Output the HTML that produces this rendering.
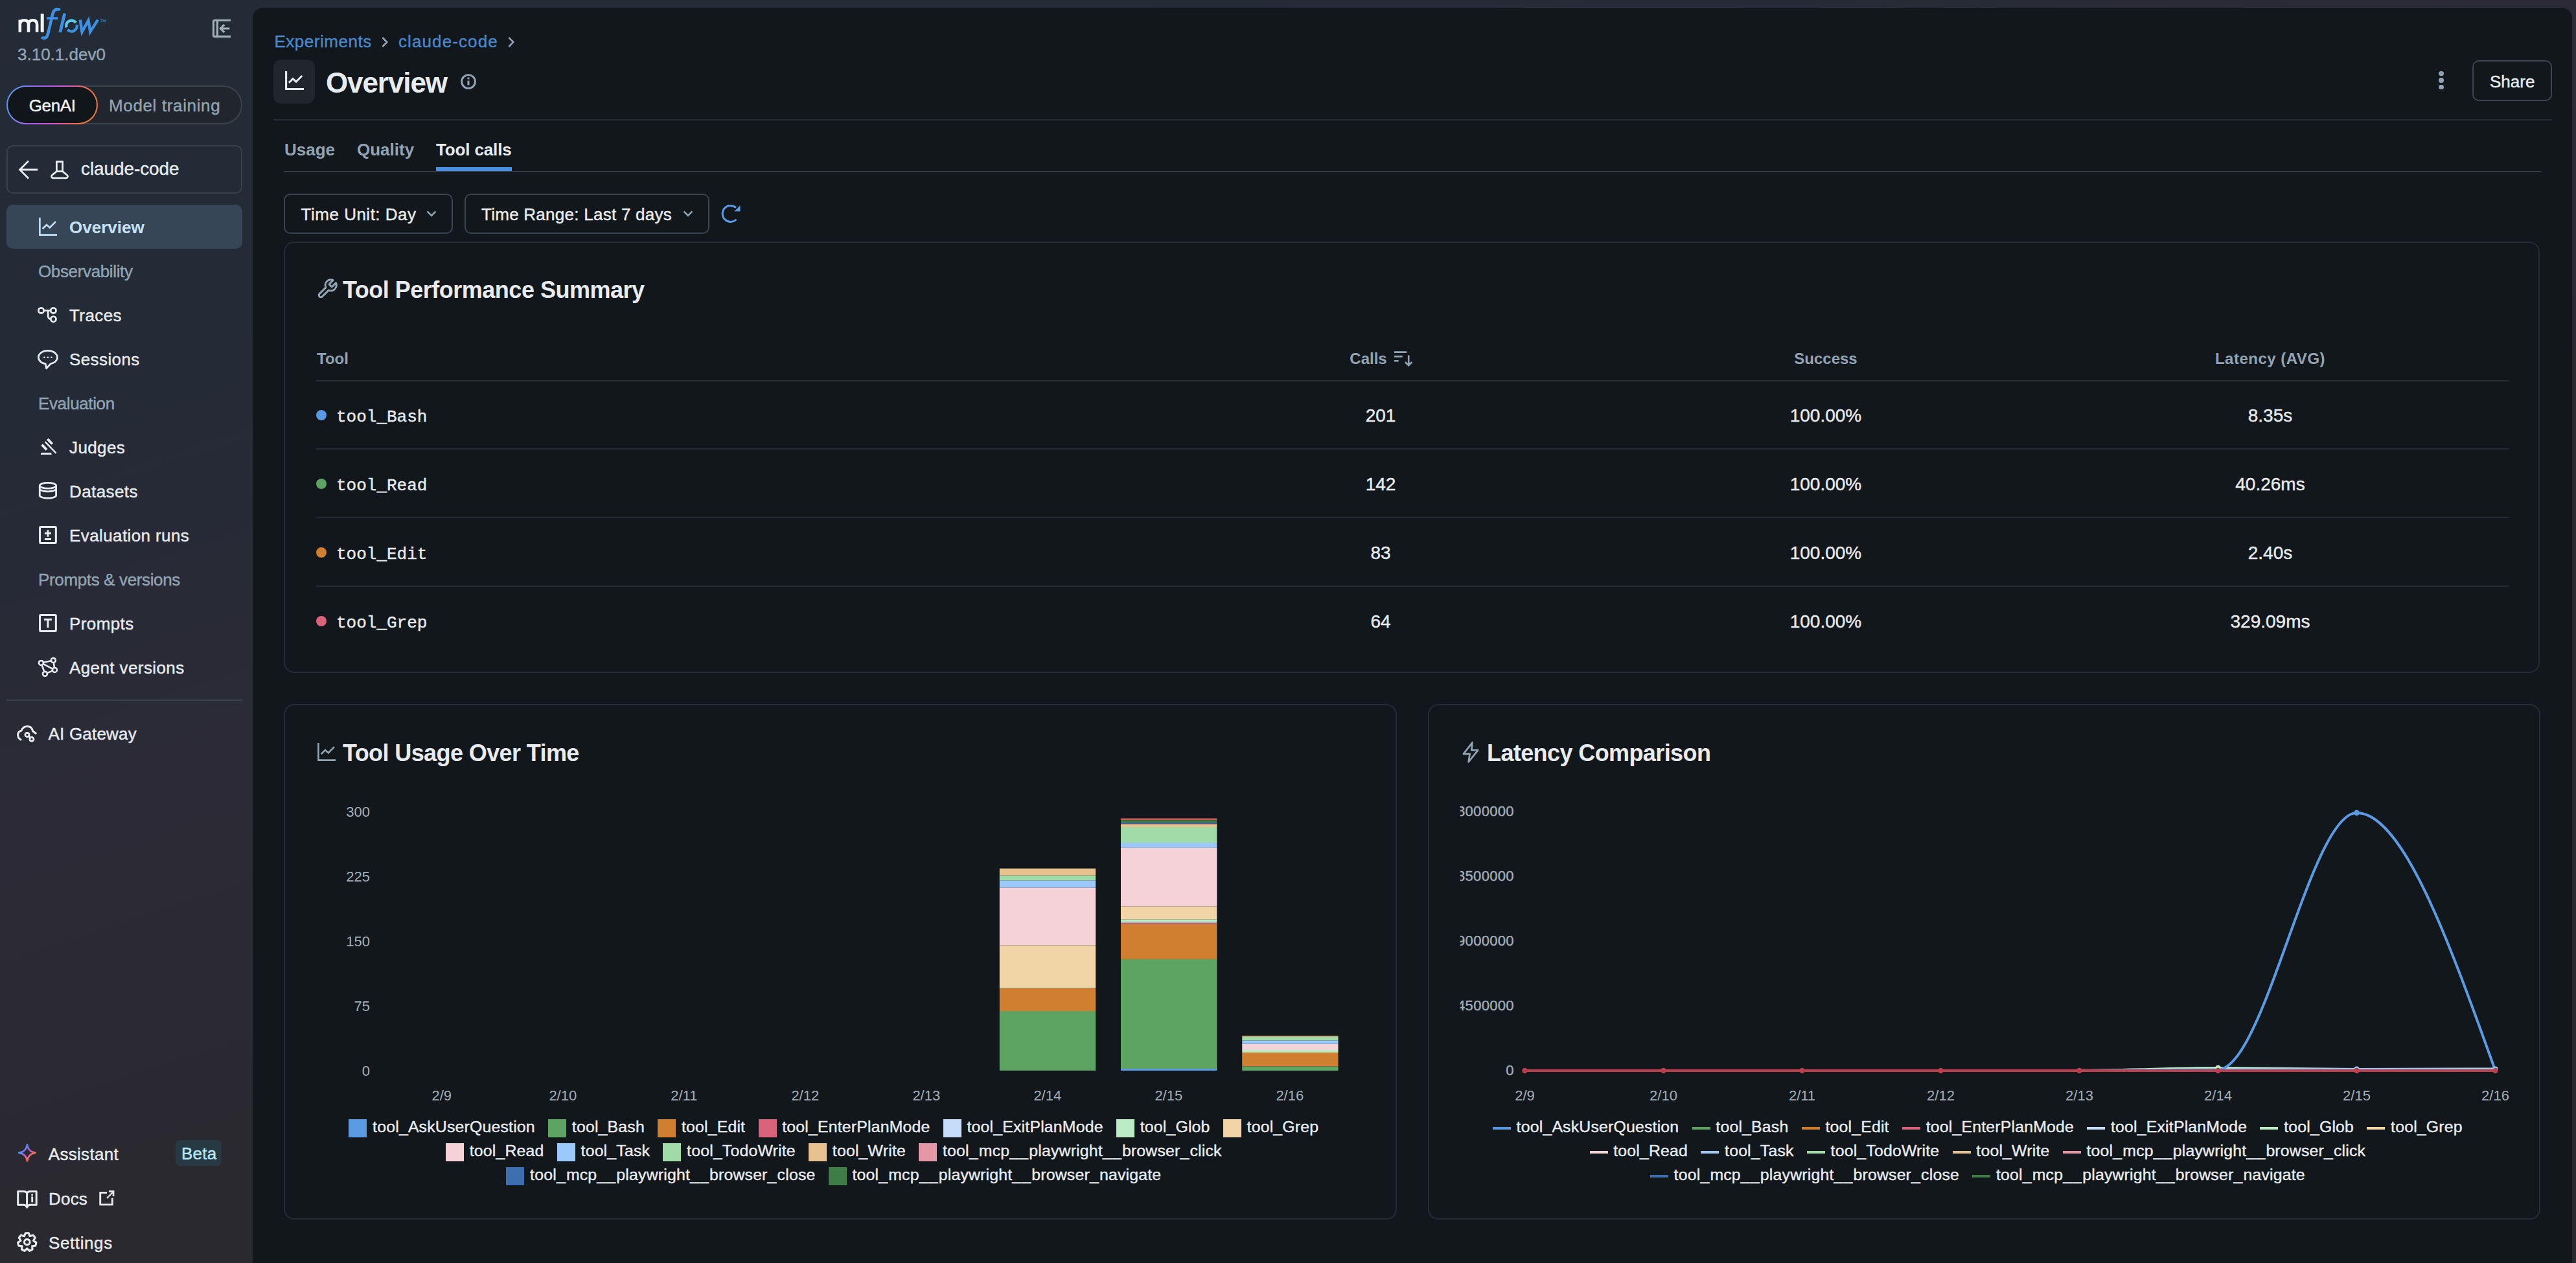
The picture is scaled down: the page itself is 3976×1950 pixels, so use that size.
<!DOCTYPE html>
<html><head><meta charset="utf-8">
<style>
html,body{margin:0;padding:0;background:#12171c;overflow:hidden;}
#root{zoom:2;position:relative;width:1988px;height:975px;overflow:hidden;font-family:"Liberation Sans",sans-serif;font-size:13px;color:#e8ecf0;
background:linear-gradient(161.9deg,#222b36 0%,#232b36 18%,#2c2a37 39%,#2b2a33 50%,#2a292f 60%,#28282d 100%);}
.a{position:absolute;}
.t{position:absolute;white-space:nowrap;line-height:1;-webkit-text-stroke:0.2px currentColor;}
.b{-webkit-text-stroke:0 !important;}
svg{position:absolute;overflow:visible;}
</style></head>
<body><div id="root">

<div class="t" style="left:13.50px;top:35.69px;font-size:13px;color:#92a4b3;font-weight:400;letter-spacing:0px;font-family:'Liberation Sans',sans-serif;">3.10.1.dev0</div>
<div class="a" style="left:5.00px;top:66.00px;width:182.00px;height:30.00px;border:1px solid #3a434d;border-radius:15px;box-sizing:border-box;background:#21262e;"></div>
<div class="a" style="left:5px;top:66px;width:70.5px;height:30px;border-radius:15px;background:linear-gradient(110deg,#52a0f2 0%,#6f8af2 15%,#a85cf0 36%,#d656d8 56%,#f06a58 76%,#f47a3a 90%);"></div>
<div class="a" style="left:6.00px;top:67.00px;width:68.50px;height:28.00px;background:#11161b;border-radius:14px;"></div>
<div class="t" style="left:22.40px;top:74.99px;font-size:13px;color:#f2f4f6;font-weight:400;letter-spacing:-0.2px;font-family:'Liberation Sans',sans-serif;">GenAI</div>
<div class="t" style="left:84.00px;top:74.99px;font-size:13px;color:#92a4b3;font-weight:400;letter-spacing:0.32px;font-family:'Liberation Sans',sans-serif;">Model training</div>
<div class="a" style="left:5.00px;top:112.00px;width:182.00px;height:37.50px;border:1px solid #39424c;border-radius:5px;box-sizing:border-box;background:transparent;"></div>
<div class="t" style="left:62.50px;top:123.65px;font-size:14px;color:#e8ecf0;font-weight:400;letter-spacing:-0.05px;font-family:'Liberation Sans',sans-serif;">claude-code</div>
<div class="a" style="left:5.00px;top:158.00px;width:182.00px;height:34.00px;background:#364656;border-radius:5px;"></div>
<svg style="left:30.00px;top:168.00px;" width="14" height="14" viewBox="0 0 14 14"><path d="M.7 0v13.3H14" stroke="#c7e3fc" stroke-width="1.3" fill="none"/><path d="M2.8 8.6 6 5.5l2.4 2.2 4.6-4.6" stroke="#c7e3fc" stroke-width="1.3" fill="none"/></svg>
<div class="t b" style="left:53.50px;top:168.99px;font-size:13px;color:#c7e3fc;font-weight:700;letter-spacing:0px;font-family:'Liberation Sans',sans-serif;">Overview</div>
<div class="t" style="left:29.50px;top:203.24px;font-size:13px;color:#92a4b3;font-weight:400;letter-spacing:-0.18px;font-family:'Liberation Sans',sans-serif;">Observability</div>
<div class="t" style="left:53.50px;top:236.99px;font-size:13px;color:#e8ecf0;font-weight:400;letter-spacing:0.2px;font-family:'Liberation Sans',sans-serif;">Traces</div>
<div class="t" style="left:53.50px;top:270.99px;font-size:13px;color:#e8ecf0;font-weight:400;letter-spacing:0.2px;font-family:'Liberation Sans',sans-serif;">Sessions</div>
<div class="t" style="left:29.50px;top:304.99px;font-size:13px;color:#92a4b3;font-weight:400;letter-spacing:-0.18px;font-family:'Liberation Sans',sans-serif;">Evaluation</div>
<div class="t" style="left:53.50px;top:338.99px;font-size:13px;color:#e8ecf0;font-weight:400;letter-spacing:0.2px;font-family:'Liberation Sans',sans-serif;">Judges</div>
<div class="t" style="left:53.50px;top:372.99px;font-size:13px;color:#e8ecf0;font-weight:400;letter-spacing:0.2px;font-family:'Liberation Sans',sans-serif;">Datasets</div>
<div class="t" style="left:53.50px;top:406.99px;font-size:13px;color:#e8ecf0;font-weight:400;letter-spacing:0.2px;font-family:'Liberation Sans',sans-serif;">Evaluation runs</div>
<div class="t" style="left:29.50px;top:440.99px;font-size:13px;color:#92a4b3;font-weight:400;letter-spacing:-0.18px;font-family:'Liberation Sans',sans-serif;">Prompts &amp; versions</div>
<div class="t" style="left:53.50px;top:474.99px;font-size:13px;color:#e8ecf0;font-weight:400;letter-spacing:0.2px;font-family:'Liberation Sans',sans-serif;">Prompts</div>
<div class="t" style="left:53.50px;top:508.99px;font-size:13px;color:#e8ecf0;font-weight:400;letter-spacing:0.2px;font-family:'Liberation Sans',sans-serif;">Agent versions</div>
<div class="a" style="left:5.00px;top:540.00px;width:182.00px;height:1.00px;background:#3a434c;"></div>
<div class="t" style="left:37.25px;top:560.14px;font-size:13px;color:#e8ecf0;font-weight:400;letter-spacing:0.1px;font-family:'Liberation Sans',sans-serif;">AI Gateway</div>
<div class="t" style="left:37.40px;top:884.34px;font-size:13px;color:#e8ecf0;font-weight:400;letter-spacing:0.15px;font-family:'Liberation Sans',sans-serif;">Assistant</div>
<div class="a" style="left:135.50px;top:880.10px;width:35.40px;height:19.70px;background:#273a44;border-radius:4px;"></div>
<div class="t" style="left:140.00px;top:883.94px;font-size:13px;color:#b8e8f7;font-weight:400;letter-spacing:0.1px;font-family:'Liberation Sans',sans-serif;">Beta</div>
<div class="t" style="left:37.50px;top:918.84px;font-size:13px;color:#e8ecf0;font-weight:400;letter-spacing:0.1px;font-family:'Liberation Sans',sans-serif;">Docs</div>
<div class="t" style="left:37.50px;top:953.24px;font-size:13px;color:#e8ecf0;font-weight:400;letter-spacing:0.3px;font-family:'Liberation Sans',sans-serif;">Settings</div>
<div class="a" style="left:195px;top:6px;width:1790px;height:1000px;background:#12171c;border-radius:8px;"></div>
<div class="t" style="left:211.70px;top:25.74px;font-size:13px;color:#4a87cc;font-weight:400;letter-spacing:0.27px;font-family:'Liberation Sans',sans-serif;">Experiments</div>
<svg style="left:294.00px;top:27.50px;" width="6" height="10" viewBox="0 0 6 10"><path d="M1.2 1.5 4.6 5 1.2 8.5" stroke="#92a4b3" stroke-width="1.3" fill="none"/></svg>
<div class="t" style="left:307.50px;top:25.74px;font-size:13px;color:#4a87cc;font-weight:400;letter-spacing:0.55px;font-family:'Liberation Sans',sans-serif;">claude-code</div>
<svg style="left:391.50px;top:27.50px;" width="6" height="10" viewBox="0 0 6 10"><path d="M1.2 1.5 4.6 5 1.2 8.5" stroke="#92a4b3" stroke-width="1.3" fill="none"/></svg>
<div class="a" style="left:211.00px;top:46.00px;width:32.00px;height:34.00px;background:#21262d;border-radius:6px;"></div>
<svg style="left:219.80px;top:55.00px;" width="14.5" height="14.5" viewBox="0 0 14.5 14.5"><path d="M.8 0v13.75H14.5" stroke="#e8ecf0" stroke-width="1.55" fill="none"/><path d="M2.9 8.9 6 5.8l2.5 2.3 4.6-4.6" stroke="#e8ecf0" stroke-width="1.5" fill="none"/></svg>
<div class="t b" style="left:251.50px;top:52.87px;font-size:22px;color:#e8ecf0;font-weight:700;letter-spacing:-0.55px;font-family:'Liberation Sans',sans-serif;">Overview</div>
<svg style="left:355.50px;top:57.00px;" width="12" height="12" viewBox="0 0 12 12"><circle cx="6" cy="6" r="5.2" stroke="#92a4b3" stroke-width="1.45" fill="none"/><path d="M6 5.3v3.4" stroke="#92a4b3" stroke-width="1.55"/><circle cx="6" cy="3.45" r=".85" fill="#92a4b3"/></svg>
<div class="a" style="left:1882.10px;top:54.80px;width:3.8px;height:3.8px;border-radius:50%;background:#92a4b3;"></div>
<div class="a" style="left:1882.10px;top:60.10px;width:3.8px;height:3.8px;border-radius:50%;background:#92a4b3;"></div>
<div class="a" style="left:1882.10px;top:65.40px;width:3.8px;height:3.8px;border-radius:50%;background:#92a4b3;"></div>
<div class="a" style="left:1908.00px;top:46.30px;width:61.50px;height:31.50px;border:1px solid #3b4550;border-radius:5px;box-sizing:border-box;background:transparent;"></div>
<div class="t" style="left:1921.50px;top:56.34px;font-size:13px;color:#e8ecf0;font-weight:400;letter-spacing:0px;font-family:'Liberation Sans',sans-serif;">Share</div>
<div class="a" style="left:211.00px;top:92.00px;width:1758.00px;height:1.00px;background:#262d35;"></div>
<div class="t b" style="left:219.50px;top:108.99px;font-size:13px;color:#92a4b3;font-weight:700;letter-spacing:0px;font-family:'Liberation Sans',sans-serif;">Usage</div>
<div class="t b" style="left:275.50px;top:108.99px;font-size:13px;color:#92a4b3;font-weight:700;letter-spacing:0px;font-family:'Liberation Sans',sans-serif;">Quality</div>
<div class="t b" style="left:336.50px;top:108.99px;font-size:13px;color:#e8ecf0;font-weight:700;letter-spacing:-0.07px;font-family:'Liberation Sans',sans-serif;">Tool calls</div>
<div class="a" style="left:219.00px;top:132.00px;width:1742.00px;height:1.00px;background:#343e48;"></div>
<div class="a" style="left:336.50px;top:129.00px;width:58.50px;height:3.00px;background:#4a90e2;"></div>
<div class="a" style="left:219.00px;top:149.30px;width:130.70px;height:31.40px;border:1px solid #3b4550;border-radius:5px;box-sizing:border-box;background:transparent;"></div>
<div class="t" style="left:232.30px;top:158.99px;font-size:13px;color:#e8ecf0;font-weight:400;letter-spacing:0.25px;font-family:'Liberation Sans',sans-serif;">Time Unit: Day</div>
<svg style="left:329.00px;top:162.00px;" width="8" height="6" viewBox="0 0 8 6"><path d="M.8 1.2 4 4.4 7.2 1.2" stroke="#92a4b3" stroke-width="1.3" fill="none"/></svg>
<div class="a" style="left:358.30px;top:149.30px;width:189.20px;height:31.40px;border:1px solid #3b4550;border-radius:5px;box-sizing:border-box;background:transparent;"></div>
<div class="t" style="left:371.50px;top:158.99px;font-size:13px;color:#e8ecf0;font-weight:400;letter-spacing:0.13px;font-family:'Liberation Sans',sans-serif;">Time Range: Last 7 days</div>
<svg style="left:527.00px;top:162.00px;" width="8" height="6" viewBox="0 0 8 6"><path d="M.8 1.2 4 4.4 7.2 1.2" stroke="#92a4b3" stroke-width="1.3" fill="none"/></svg>
<div class="a" style="left:219.00px;top:186.50px;width:1741.00px;height:333.00px;border:1px solid #262c33;border-radius:8px;box-sizing:border-box;background:transparent;"></div>
<div class="t b" style="left:264.50px;top:215.01px;font-size:18px;color:#e8ecf0;font-weight:700;letter-spacing:-0.25px;font-family:'Liberation Sans',sans-serif;">Tool Performance Summary</div>
<div class="t b" style="left:244.50px;top:270.84px;font-size:12px;color:#92a4b3;font-weight:700;letter-spacing:0px;font-family:'Liberation Sans',sans-serif;">Tool</div>
<div class="t b" style="left:1026.00px;top:270.84px;width:60px;text-align:center;font-size:12px;color:#92a4b3;font-weight:700;letter-spacing:0px;font-family:'Liberation Sans',sans-serif;">Calls</div>
<svg style="left:1075.50px;top:270.50px;" width="15" height="13" viewBox="0 0 15 13"><path d="M.5 1.3h9.5M.5 4.7h6.3M.5 8.1h3.3" stroke="#92a4b3" stroke-width="1.3"/><path d="M11.6 3.8v7.6M9 9l2.6 2.6L14.2 9" stroke="#92a4b3" stroke-width="1.3" fill="none"/></svg>
<div class="t b" style="left:1359.00px;top:270.84px;width:100px;text-align:center;font-size:12px;color:#92a4b3;font-weight:700;letter-spacing:0px;font-family:'Liberation Sans',sans-serif;">Success</div>
<div class="t b" style="left:1692.00px;top:270.84px;width:120px;text-align:center;font-size:12px;color:#92a4b3;font-weight:700;letter-spacing:0.25px;font-family:'Liberation Sans',sans-serif;">Latency (AVG)</div>
<div class="a" style="left:244.00px;top:293.50px;width:1692.00px;height:1.00px;background:#262d34;"></div>
<div class="a" style="left:244px;top:316.40px;width:8px;height:8px;border-radius:50%;background:#5b9be3;"></div>
<div class="t" style="left:259.50px;top:315.69px;font-size:13px;color:#e8ecf0;font-weight:400;letter-spacing:0px;font-family:'Liberation Mono',monospace;">tool_Bash</div>
<div class="t" style="left:1025.50px;top:313.80px;width:80px;text-align:center;font-size:14px;color:#e8ecf0;font-weight:400;letter-spacing:0px;font-family:'Liberation Sans',sans-serif;">201</div>
<div class="t" style="left:1359.00px;top:313.80px;width:100px;text-align:center;font-size:14px;color:#e8ecf0;font-weight:400;letter-spacing:0px;font-family:'Liberation Sans',sans-serif;">100.00%</div>
<div class="t" style="left:1702.00px;top:313.80px;width:100px;text-align:center;font-size:14px;color:#e8ecf0;font-weight:400;letter-spacing:0px;font-family:'Liberation Sans',sans-serif;">8.35s</div>
<div class="a" style="left:244.00px;top:346.10px;width:1692.00px;height:1.00px;background:#262d34;"></div>
<div class="a" style="left:244px;top:369.40px;width:8px;height:8px;border-radius:50%;background:#5da463;"></div>
<div class="t" style="left:259.50px;top:368.69px;font-size:13px;color:#e8ecf0;font-weight:400;letter-spacing:0px;font-family:'Liberation Mono',monospace;">tool_Read</div>
<div class="t" style="left:1025.50px;top:366.80px;width:80px;text-align:center;font-size:14px;color:#e8ecf0;font-weight:400;letter-spacing:0px;font-family:'Liberation Sans',sans-serif;">142</div>
<div class="t" style="left:1359.00px;top:366.80px;width:100px;text-align:center;font-size:14px;color:#e8ecf0;font-weight:400;letter-spacing:0px;font-family:'Liberation Sans',sans-serif;">100.00%</div>
<div class="t" style="left:1702.00px;top:366.80px;width:100px;text-align:center;font-size:14px;color:#e8ecf0;font-weight:400;letter-spacing:0px;font-family:'Liberation Sans',sans-serif;">40.26ms</div>
<div class="a" style="left:244.00px;top:399.10px;width:1692.00px;height:1.00px;background:#262d34;"></div>
<div class="a" style="left:244px;top:422.40px;width:8px;height:8px;border-radius:50%;background:#cf7f2f;"></div>
<div class="t" style="left:259.50px;top:421.69px;font-size:13px;color:#e8ecf0;font-weight:400;letter-spacing:0px;font-family:'Liberation Mono',monospace;">tool_Edit</div>
<div class="t" style="left:1025.50px;top:419.80px;width:80px;text-align:center;font-size:14px;color:#e8ecf0;font-weight:400;letter-spacing:0px;font-family:'Liberation Sans',sans-serif;">83</div>
<div class="t" style="left:1359.00px;top:419.80px;width:100px;text-align:center;font-size:14px;color:#e8ecf0;font-weight:400;letter-spacing:0px;font-family:'Liberation Sans',sans-serif;">100.00%</div>
<div class="t" style="left:1702.00px;top:419.80px;width:100px;text-align:center;font-size:14px;color:#e8ecf0;font-weight:400;letter-spacing:0px;font-family:'Liberation Sans',sans-serif;">2.40s</div>
<div class="a" style="left:244.00px;top:452.10px;width:1692.00px;height:1.00px;background:#262d34;"></div>
<div class="a" style="left:244px;top:475.40px;width:8px;height:8px;border-radius:50%;background:#d9637b;"></div>
<div class="t" style="left:259.50px;top:474.69px;font-size:13px;color:#e8ecf0;font-weight:400;letter-spacing:0px;font-family:'Liberation Mono',monospace;">tool_Grep</div>
<div class="t" style="left:1025.50px;top:472.80px;width:80px;text-align:center;font-size:14px;color:#e8ecf0;font-weight:400;letter-spacing:0px;font-family:'Liberation Sans',sans-serif;">64</div>
<div class="t" style="left:1359.00px;top:472.80px;width:100px;text-align:center;font-size:14px;color:#e8ecf0;font-weight:400;letter-spacing:0px;font-family:'Liberation Sans',sans-serif;">100.00%</div>
<div class="t" style="left:1702.00px;top:472.80px;width:100px;text-align:center;font-size:14px;color:#e8ecf0;font-weight:400;letter-spacing:0px;font-family:'Liberation Sans',sans-serif;">329.09ms</div>
<div class="a" style="left:219.00px;top:543.50px;width:859.00px;height:398.00px;border:1px solid #262c33;border-radius:8px;box-sizing:border-box;background:transparent;"></div>
<div class="a" style="left:1102.00px;top:543.50px;width:858.50px;height:398.00px;border:1px solid #262c33;border-radius:8px;box-sizing:border-box;background:transparent;"></div>
<svg style="left:245.00px;top:573.50px;" width="14" height="14" viewBox="0 0 14 14"><path d="M.7 0v13.3H14" stroke="#92a4b3" stroke-width="1.3" fill="none"/><path d="M2.8 8.6 6 5.5l2.4 2.2 4.6-4.6" stroke="#92a4b3" stroke-width="1.3" fill="none"/></svg>
<div class="t b" style="left:264.50px;top:572.26px;font-size:18px;color:#e8ecf0;font-weight:700;letter-spacing:-0.3px;font-family:'Liberation Sans',sans-serif;">Tool Usage Over Time</div>
<div class="t b" style="left:1147.50px;top:572.26px;font-size:18px;color:#e8ecf0;font-weight:700;letter-spacing:-0.3px;font-family:'Liberation Sans',sans-serif;">Latency Comparison</div>
<svg style="left:0.00px;top:0.00px;font-family:'Liberation Sans',sans-serif;" width="1988" height="975" viewBox="0 0 1988 975"><text x="285.5" y="630.50" text-anchor="end" font-size="11" fill="#a3afba">300</text><text x="285.5" y="680.50" text-anchor="end" font-size="11" fill="#a3afba">225</text><text x="285.5" y="730.50" text-anchor="end" font-size="11" fill="#a3afba">150</text><text x="285.5" y="780.50" text-anchor="end" font-size="11" fill="#a3afba">75</text><text x="285.5" y="830.50" text-anchor="end" font-size="11" fill="#a3afba">0</text><text x="340.90" y="849.45" text-anchor="middle" font-size="11" fill="#a3afba">2/9</text><text x="434.40" y="849.45" text-anchor="middle" font-size="11" fill="#a3afba">2/10</text><text x="527.90" y="849.45" text-anchor="middle" font-size="11" fill="#a3afba">2/11</text><text x="621.40" y="849.45" text-anchor="middle" font-size="11" fill="#a3afba">2/12</text><text x="714.90" y="849.45" text-anchor="middle" font-size="11" fill="#a3afba">2/13</text><text x="808.40" y="849.45" text-anchor="middle" font-size="11" fill="#a3afba">2/14</text><text x="901.90" y="849.45" text-anchor="middle" font-size="11" fill="#a3afba">2/15</text><text x="995.40" y="849.45" text-anchor="middle" font-size="11" fill="#a3afba">2/16</text><rect x="771.4" y="780.50" width="74.15" height="45.95" fill="#5da463"/><rect x="771.4" y="762.85" width="74.15" height="17.65" fill="#cf7f2f"/><rect x="771.4" y="762.60" width="74.15" height="0.25" fill="#bbecc5"/><rect x="771.4" y="729.75" width="74.15" height="32.85" fill="#f2d5a7"/><rect x="771.4" y="685.20" width="74.15" height="44.55" fill="#f5d2d8"/><rect x="771.4" y="679.65" width="74.15" height="5.55" fill="#9bc9fb"/><rect x="771.4" y="675.80" width="74.15" height="3.85" fill="#a0dba8"/><rect x="771.4" y="670.45" width="74.15" height="5.35" fill="#e8c28e"/><rect x="865.0" y="825.00" width="74.15" height="1.50" fill="#5b9be3"/><rect x="865.0" y="740.45" width="74.15" height="84.55" fill="#5da463"/><rect x="865.0" y="713.30" width="74.15" height="27.15" fill="#cf7f2f"/><rect x="865.0" y="712.40" width="74.15" height="0.90" fill="#d9637b"/><rect x="865.0" y="711.75" width="74.15" height="0.65" fill="#c5ddf8"/><rect x="865.0" y="709.70" width="74.15" height="2.05" fill="#bbecc5"/><rect x="865.0" y="699.75" width="74.15" height="9.95" fill="#f2d5a7"/><rect x="865.0" y="654.45" width="74.15" height="45.30" fill="#f5d2d8"/><rect x="865.0" y="650.50" width="74.15" height="3.95" fill="#9bc9fb"/><rect x="865.0" y="638.50" width="74.15" height="12.00" fill="#a0dba8"/><rect x="865.0" y="636.25" width="74.15" height="2.25" fill="#e8c28e"/><rect x="865.0" y="635.90" width="74.15" height="0.35" fill="#e597a5"/><rect x="865.0" y="635.05" width="74.15" height="0.85" fill="#3c6eb0"/><rect x="865.0" y="633.10" width="74.15" height="1.95" fill="#3e7d48"/><rect x="865.0" y="632.45" width="74.15" height="0.65" fill="#c45e2e"/><rect x="865.0" y="631.75" width="74.15" height="0.70" fill="#d9627a"/><rect x="958.6" y="823.15" width="74.15" height="3.35" fill="#5da463"/><rect x="958.6" y="812.50" width="74.15" height="10.65" fill="#cf7f2f"/><rect x="958.6" y="810.50" width="74.15" height="2.00" fill="#bbecc5"/><rect x="958.6" y="805.85" width="74.15" height="4.65" fill="#f5d2d8"/><rect x="958.6" y="803.20" width="74.15" height="2.65" fill="#9bc9fb"/><rect x="958.6" y="800.40" width="74.15" height="2.80" fill="#a0dba8"/><rect x="958.6" y="799.60" width="74.15" height="0.80" fill="#e8c28e"/></svg>
<div class="a" style="left:1127px;top:600px;width:60px;height:250px;overflow:hidden;">
<div class="t" style="right:18.60px;top:21.19px;font-size:11px;color:#a3afba;letter-spacing:0.15px;">18000000</div>
<div class="t" style="right:18.60px;top:71.19px;font-size:11px;color:#a3afba;letter-spacing:0.15px;">13500000</div>
<div class="t" style="right:18.60px;top:121.19px;font-size:11px;color:#a3afba;letter-spacing:0.15px;">9000000</div>
<div class="t" style="right:18.60px;top:171.19px;font-size:11px;color:#a3afba;letter-spacing:0.15px;">4500000</div>
<div class="t" style="right:18.60px;top:221.19px;font-size:11px;color:#a3afba;letter-spacing:0.15px;">0</div>
</div>
<svg style="left:0.00px;top:0.00px;font-family:'Liberation Sans',sans-serif;" width="1988" height="975" viewBox="0 0 1988 975"><text x="1176.75" y="849.45" text-anchor="middle" font-size="11" fill="#a3afba">2/9</text><text x="1283.75" y="849.45" text-anchor="middle" font-size="11" fill="#a3afba">2/10</text><text x="1390.75" y="849.45" text-anchor="middle" font-size="11" fill="#a3afba">2/11</text><text x="1497.75" y="849.45" text-anchor="middle" font-size="11" fill="#a3afba">2/12</text><text x="1604.75" y="849.45" text-anchor="middle" font-size="11" fill="#a3afba">2/13</text><text x="1711.75" y="849.45" text-anchor="middle" font-size="11" fill="#a3afba">2/14</text><text x="1818.75" y="849.45" text-anchor="middle" font-size="11" fill="#a3afba">2/15</text><text x="1925.75" y="849.45" text-anchor="middle" font-size="11" fill="#a3afba">2/16</text><path d="M1604.75,826.2 C1640.75,826.2 1675.75,824.3 1711.75,824.3 C1747.75,824.3 1782.75,825.3 1818.75,825.3 L1925.75,825.0" stroke="#bbecc5" stroke-width="1.6" fill="none"/><path d="M1711.75,825.2 L1925.75,825.2" stroke="#9bc9fb" stroke-width="1.4" fill="none"/><path d="M1176.75,826.5 L1604.75,826.5 L1711.75,825.7 C1747.42,825.7 1783.08,627.5 1818.75,627.5 C1854.42,627.5 1890.08,727.00 1925.75,826.5" stroke="#5b9be3" stroke-width="2" fill="none"/><circle cx="1818.75" cy="627.5" r="2.2" fill="#5b9be3"/><circle cx="1711.75" cy="824.3" r="2.1" fill="#bbecc5"/><circle cx="1818.75" cy="825.2" r="2" fill="#9bc9fb"/><circle cx="1925.75" cy="825.2" r="2" fill="#9bc9fb"/><path d="M1176.75,826.5 L1925.75,826.5" stroke="#bd3f4e" stroke-width="2" fill="none"/><circle cx="1176.75" cy="826.5" r="2.1" fill="#bd3f4e"/><circle cx="1283.75" cy="826.5" r="2.1" fill="#bd3f4e"/><circle cx="1390.75" cy="826.5" r="2.1" fill="#bd3f4e"/><circle cx="1497.75" cy="826.5" r="2.1" fill="#bd3f4e"/><circle cx="1604.75" cy="826.5" r="2.1" fill="#bd3f4e"/><circle cx="1711.75" cy="826.5" r="2.1" fill="#bd3f4e"/><circle cx="1818.75" cy="826.5" r="2.1" fill="#bd3f4e"/><circle cx="1925.75" cy="826.5" r="2.1" fill="#bd3f4e"/></svg>
<div class="a" style="left:48.5px;top:864.00px;width:1200px;height:14px;display:flex;justify-content:center;">
<span style="display:flex;margin-right:10.15px;height:14px;"><span style="display:inline-block;width:14px;height:14px;background:#5b9be3;margin-right:4.35px;flex:none;"></span><span style="font-size:12.4px;line-height:1;position:relative;top:0.00px;letter-spacing:0.1px;white-space:nowrap;-webkit-text-stroke:0.2px currentColor;">tool_AskUserQuestion</span></span>
<span style="display:flex;margin-right:10.15px;height:14px;"><span style="display:inline-block;width:14px;height:14px;background:#5da463;margin-right:4.35px;flex:none;"></span><span style="font-size:12.4px;line-height:1;position:relative;top:0.00px;letter-spacing:0.1px;white-space:nowrap;-webkit-text-stroke:0.2px currentColor;">tool_Bash</span></span>
<span style="display:flex;margin-right:10.15px;height:14px;"><span style="display:inline-block;width:14px;height:14px;background:#cf7f2f;margin-right:4.35px;flex:none;"></span><span style="font-size:12.4px;line-height:1;position:relative;top:0.00px;letter-spacing:0.1px;white-space:nowrap;-webkit-text-stroke:0.2px currentColor;">tool_Edit</span></span>
<span style="display:flex;margin-right:10.15px;height:14px;"><span style="display:inline-block;width:14px;height:14px;background:#d9637b;margin-right:4.35px;flex:none;"></span><span style="font-size:12.4px;line-height:1;position:relative;top:0.00px;letter-spacing:0.1px;white-space:nowrap;-webkit-text-stroke:0.2px currentColor;">tool_EnterPlanMode</span></span>
<span style="display:flex;margin-right:10.15px;height:14px;"><span style="display:inline-block;width:14px;height:14px;background:#c5ddf8;margin-right:4.35px;flex:none;"></span><span style="font-size:12.4px;line-height:1;position:relative;top:0.00px;letter-spacing:0.1px;white-space:nowrap;-webkit-text-stroke:0.2px currentColor;">tool_ExitPlanMode</span></span>
<span style="display:flex;margin-right:10.15px;height:14px;"><span style="display:inline-block;width:14px;height:14px;background:#bbecc5;margin-right:4.35px;flex:none;"></span><span style="font-size:12.4px;line-height:1;position:relative;top:0.00px;letter-spacing:0.1px;white-space:nowrap;-webkit-text-stroke:0.2px currentColor;">tool_Glob</span></span>
<span style="display:flex;margin-right:10.15px;height:14px;"><span style="display:inline-block;width:14px;height:14px;background:#f2d5a7;margin-right:4.35px;flex:none;"></span><span style="font-size:12.4px;line-height:1;position:relative;top:0.00px;letter-spacing:0.1px;white-space:nowrap;-webkit-text-stroke:0.2px currentColor;">tool_Grep</span></span>
</div>
<div class="a" style="left:48.5px;top:882.50px;width:1200px;height:14px;display:flex;justify-content:center;">
<span style="display:flex;margin-right:10.15px;height:14px;"><span style="display:inline-block;width:14px;height:14px;background:#f5d2d8;margin-right:4.35px;flex:none;"></span><span style="font-size:12.4px;line-height:1;position:relative;top:0.00px;letter-spacing:0.1px;white-space:nowrap;-webkit-text-stroke:0.2px currentColor;">tool_Read</span></span>
<span style="display:flex;margin-right:10.15px;height:14px;"><span style="display:inline-block;width:14px;height:14px;background:#9bc9fb;margin-right:4.35px;flex:none;"></span><span style="font-size:12.4px;line-height:1;position:relative;top:0.00px;letter-spacing:0.1px;white-space:nowrap;-webkit-text-stroke:0.2px currentColor;">tool_Task</span></span>
<span style="display:flex;margin-right:10.15px;height:14px;"><span style="display:inline-block;width:14px;height:14px;background:#a0dba8;margin-right:4.35px;flex:none;"></span><span style="font-size:12.4px;line-height:1;position:relative;top:0.00px;letter-spacing:0.1px;white-space:nowrap;-webkit-text-stroke:0.2px currentColor;">tool_TodoWrite</span></span>
<span style="display:flex;margin-right:10.15px;height:14px;"><span style="display:inline-block;width:14px;height:14px;background:#e8c28e;margin-right:4.35px;flex:none;"></span><span style="font-size:12.4px;line-height:1;position:relative;top:0.00px;letter-spacing:0.1px;white-space:nowrap;-webkit-text-stroke:0.2px currentColor;">tool_Write</span></span>
<span style="display:flex;margin-right:10.15px;height:14px;"><span style="display:inline-block;width:14px;height:14px;background:#e597a5;margin-right:4.35px;flex:none;"></span><span style="font-size:12.4px;line-height:1;position:relative;top:0.00px;letter-spacing:0.1px;white-space:nowrap;-webkit-text-stroke:0.2px currentColor;">tool<span style="letter-spacing:0.6px">_</span>mcp<span style="letter-spacing:0.6px">_</span><span style="letter-spacing:0.6px">_</span>playwright<span style="letter-spacing:0.6px">_</span><span style="letter-spacing:0.6px">_</span>browser<span style="letter-spacing:0.6px">_</span>click</span></span>
</div>
<div class="a" style="left:48.5px;top:901.00px;width:1200px;height:14px;display:flex;justify-content:center;">
<span style="display:flex;margin-right:10.15px;height:14px;"><span style="display:inline-block;width:14px;height:14px;background:#3c6eb0;margin-right:4.35px;flex:none;"></span><span style="font-size:12.4px;line-height:1;position:relative;top:0.00px;letter-spacing:0.1px;white-space:nowrap;-webkit-text-stroke:0.2px currentColor;">tool<span style="letter-spacing:0.6px">_</span>mcp<span style="letter-spacing:0.6px">_</span><span style="letter-spacing:0.6px">_</span>playwright<span style="letter-spacing:0.6px">_</span><span style="letter-spacing:0.6px">_</span>browser<span style="letter-spacing:0.6px">_</span>close</span></span>
<span style="display:flex;margin-right:10.15px;height:14px;"><span style="display:inline-block;width:14px;height:14px;background:#3e7d48;margin-right:4.35px;flex:none;"></span><span style="font-size:12.4px;line-height:1;position:relative;top:0.00px;letter-spacing:0.1px;white-space:nowrap;-webkit-text-stroke:0.2px currentColor;">tool<span style="letter-spacing:0.6px">_</span>mcp<span style="letter-spacing:0.6px">_</span><span style="letter-spacing:0.6px">_</span>playwright<span style="letter-spacing:0.6px">_</span><span style="letter-spacing:0.6px">_</span>browser<span style="letter-spacing:0.6px">_</span>navigate</span></span>
</div>
<div class="a" style="left:931.25px;top:864.00px;width:1200px;height:14px;display:flex;justify-content:center;">
<span style="display:flex;margin-right:10.15px;height:14px;"><span style="display:inline-block;width:14px;height:14px;position:relative;margin-right:4.35px;flex:none;"><span style="position:absolute;left:0;top:6px;width:14px;height:2px;background:#5b9be3;"></span></span><span style="font-size:12.4px;line-height:1;position:relative;top:0.00px;letter-spacing:0.1px;white-space:nowrap;-webkit-text-stroke:0.2px currentColor;">tool_AskUserQuestion</span></span>
<span style="display:flex;margin-right:10.15px;height:14px;"><span style="display:inline-block;width:14px;height:14px;position:relative;margin-right:4.35px;flex:none;"><span style="position:absolute;left:0;top:6px;width:14px;height:2px;background:#5da463;"></span></span><span style="font-size:12.4px;line-height:1;position:relative;top:0.00px;letter-spacing:0.1px;white-space:nowrap;-webkit-text-stroke:0.2px currentColor;">tool_Bash</span></span>
<span style="display:flex;margin-right:10.15px;height:14px;"><span style="display:inline-block;width:14px;height:14px;position:relative;margin-right:4.35px;flex:none;"><span style="position:absolute;left:0;top:6px;width:14px;height:2px;background:#cf7f2f;"></span></span><span style="font-size:12.4px;line-height:1;position:relative;top:0.00px;letter-spacing:0.1px;white-space:nowrap;-webkit-text-stroke:0.2px currentColor;">tool_Edit</span></span>
<span style="display:flex;margin-right:10.15px;height:14px;"><span style="display:inline-block;width:14px;height:14px;position:relative;margin-right:4.35px;flex:none;"><span style="position:absolute;left:0;top:6px;width:14px;height:2px;background:#d9637b;"></span></span><span style="font-size:12.4px;line-height:1;position:relative;top:0.00px;letter-spacing:0.1px;white-space:nowrap;-webkit-text-stroke:0.2px currentColor;">tool_EnterPlanMode</span></span>
<span style="display:flex;margin-right:10.15px;height:14px;"><span style="display:inline-block;width:14px;height:14px;position:relative;margin-right:4.35px;flex:none;"><span style="position:absolute;left:0;top:6px;width:14px;height:2px;background:#c5ddf8;"></span></span><span style="font-size:12.4px;line-height:1;position:relative;top:0.00px;letter-spacing:0.1px;white-space:nowrap;-webkit-text-stroke:0.2px currentColor;">tool_ExitPlanMode</span></span>
<span style="display:flex;margin-right:10.15px;height:14px;"><span style="display:inline-block;width:14px;height:14px;position:relative;margin-right:4.35px;flex:none;"><span style="position:absolute;left:0;top:6px;width:14px;height:2px;background:#bbecc5;"></span></span><span style="font-size:12.4px;line-height:1;position:relative;top:0.00px;letter-spacing:0.1px;white-space:nowrap;-webkit-text-stroke:0.2px currentColor;">tool_Glob</span></span>
<span style="display:flex;margin-right:10.15px;height:14px;"><span style="display:inline-block;width:14px;height:14px;position:relative;margin-right:4.35px;flex:none;"><span style="position:absolute;left:0;top:6px;width:14px;height:2px;background:#f2d5a7;"></span></span><span style="font-size:12.4px;line-height:1;position:relative;top:0.00px;letter-spacing:0.1px;white-space:nowrap;-webkit-text-stroke:0.2px currentColor;">tool_Grep</span></span>
</div>
<div class="a" style="left:931.25px;top:882.50px;width:1200px;height:14px;display:flex;justify-content:center;">
<span style="display:flex;margin-right:10.15px;height:14px;"><span style="display:inline-block;width:14px;height:14px;position:relative;margin-right:4.35px;flex:none;"><span style="position:absolute;left:0;top:6px;width:14px;height:2px;background:#f5d2d8;"></span></span><span style="font-size:12.4px;line-height:1;position:relative;top:0.00px;letter-spacing:0.1px;white-space:nowrap;-webkit-text-stroke:0.2px currentColor;">tool_Read</span></span>
<span style="display:flex;margin-right:10.15px;height:14px;"><span style="display:inline-block;width:14px;height:14px;position:relative;margin-right:4.35px;flex:none;"><span style="position:absolute;left:0;top:6px;width:14px;height:2px;background:#9bc9fb;"></span></span><span style="font-size:12.4px;line-height:1;position:relative;top:0.00px;letter-spacing:0.1px;white-space:nowrap;-webkit-text-stroke:0.2px currentColor;">tool_Task</span></span>
<span style="display:flex;margin-right:10.15px;height:14px;"><span style="display:inline-block;width:14px;height:14px;position:relative;margin-right:4.35px;flex:none;"><span style="position:absolute;left:0;top:6px;width:14px;height:2px;background:#a0dba8;"></span></span><span style="font-size:12.4px;line-height:1;position:relative;top:0.00px;letter-spacing:0.1px;white-space:nowrap;-webkit-text-stroke:0.2px currentColor;">tool_TodoWrite</span></span>
<span style="display:flex;margin-right:10.15px;height:14px;"><span style="display:inline-block;width:14px;height:14px;position:relative;margin-right:4.35px;flex:none;"><span style="position:absolute;left:0;top:6px;width:14px;height:2px;background:#e8c28e;"></span></span><span style="font-size:12.4px;line-height:1;position:relative;top:0.00px;letter-spacing:0.1px;white-space:nowrap;-webkit-text-stroke:0.2px currentColor;">tool_Write</span></span>
<span style="display:flex;margin-right:10.15px;height:14px;"><span style="display:inline-block;width:14px;height:14px;position:relative;margin-right:4.35px;flex:none;"><span style="position:absolute;left:0;top:6px;width:14px;height:2px;background:#e597a5;"></span></span><span style="font-size:12.4px;line-height:1;position:relative;top:0.00px;letter-spacing:0.1px;white-space:nowrap;-webkit-text-stroke:0.2px currentColor;">tool<span style="letter-spacing:0.6px">_</span>mcp<span style="letter-spacing:0.6px">_</span><span style="letter-spacing:0.6px">_</span>playwright<span style="letter-spacing:0.6px">_</span><span style="letter-spacing:0.6px">_</span>browser<span style="letter-spacing:0.6px">_</span>click</span></span>
</div>
<div class="a" style="left:931.25px;top:901.00px;width:1200px;height:14px;display:flex;justify-content:center;">
<span style="display:flex;margin-right:10.15px;height:14px;"><span style="display:inline-block;width:14px;height:14px;position:relative;margin-right:4.35px;flex:none;"><span style="position:absolute;left:0;top:6px;width:14px;height:2px;background:#3c6eb0;"></span></span><span style="font-size:12.4px;line-height:1;position:relative;top:0.00px;letter-spacing:0.1px;white-space:nowrap;-webkit-text-stroke:0.2px currentColor;">tool<span style="letter-spacing:0.6px">_</span>mcp<span style="letter-spacing:0.6px">_</span><span style="letter-spacing:0.6px">_</span>playwright<span style="letter-spacing:0.6px">_</span><span style="letter-spacing:0.6px">_</span>browser<span style="letter-spacing:0.6px">_</span>close</span></span>
<span style="display:flex;margin-right:10.15px;height:14px;"><span style="display:inline-block;width:14px;height:14px;position:relative;margin-right:4.35px;flex:none;"><span style="position:absolute;left:0;top:6px;width:14px;height:2px;background:#3e7d48;"></span></span><span style="font-size:12.4px;line-height:1;position:relative;top:0.00px;letter-spacing:0.1px;white-space:nowrap;-webkit-text-stroke:0.2px currentColor;">tool<span style="letter-spacing:0.6px">_</span>mcp<span style="letter-spacing:0.6px">_</span><span style="letter-spacing:0.6px">_</span>playwright<span style="letter-spacing:0.6px">_</span><span style="letter-spacing:0.6px">_</span>browser<span style="letter-spacing:0.6px">_</span>navigate</span></span>
</div>
<svg style="left:0;top:0" width="1988" height="975" viewBox="0 0 1988 975"><path d="M178 15.75H165.6Q164.75 15.75 164.75 16.6V27.35Q164.75 28.2 165.6 28.2H178M167.75 15.75V28.2M177.2 22H170.6M173.1 19.1 170.2 22 173.1 24.9" stroke="#a3b0bc" stroke-width="1.55" fill="none"/><path d="M29 131H15.9M22 124.3 15.3 131l6.7 6.7" stroke="#e8ecf0" fill="none" stroke-width="1.4"/><path d="M43.7 132.1V124.75H48.3V132.1M43.7 132.3 40.4 135c-1.1.9-.6 2.45.8 2.45h9.6c1.4 0 1.9-1.55.8-2.45L48.3 132.3Z" stroke="#e8ecf0" fill="none" stroke-width="1.4" stroke-linejoin="round"/><circle cx="31.75" cy="239.7" r="2.05" stroke="#e8ecf0" fill="none" stroke-width="1.4"/><circle cx="41.2" cy="239.7" r="2.05" stroke="#e8ecf0" fill="none" stroke-width="1.4"/><circle cx="41.2" cy="246.35" r="2.05" stroke="#e8ecf0" fill="none" stroke-width="1.4"/><path d="M33.8 239.7H39.15M37.1 239.7V243.4C37.1 245.2 37.9 246.35 39.15 246.35" stroke="#e8ecf0" fill="none" stroke-width="1.4"/><path d="M39.1 280.83A7.27 5.18 0 1 0 35.05 280.87L35.8 284.4Z" stroke="#e8ecf0" fill="none" stroke-width="1.4" stroke-linejoin="round"/><circle cx="34.2" cy="275.85" r=".65" fill="#e8ecf0"/><circle cx="36.95" cy="275.85" r=".65" fill="#e8ecf0"/><circle cx="39.75" cy="275.85" r=".65" fill="#e8ecf0"/><path d="M36.71 338.96 40.37 342.75M32.36 343.28 36.02 347.15" stroke="#e8ecf0" stroke-width="1.95" fill="none"/><path d="M34.89 341.1 43.25 349.8" stroke="#e8ecf0" stroke-width="1.2"/><path d="M31.5 350.2H39.75" stroke="#e8ecf0" stroke-width="1.5"/><ellipse cx="36.97" cy="374.9" rx="6.33" ry="2.21" stroke="#e8ecf0" fill="none" stroke-width="1.4"/><path d="M30.65 374.9V382.5A6.33 2.21 0 0 0 43.3 382.5V374.9M30.65 377.3A6.33 2.21 0 0 0 43.3 377.3" stroke="#e8ecf0" fill="none" stroke-width="1.4"/><rect x="30.78" y="406.78" width="12.4" height="12.44" rx=".6" stroke="#e8ecf0" fill="none" stroke-width="1.5"/><path d="M36.98 409.1V414.35M34.45 411.75H39.5M34.45 416.25H39.5" stroke="#e8ecf0" fill="none" stroke-width="1.4"/><rect x="30.78" y="474.78" width="12.4" height="12.44" rx=".6" stroke="#e8ecf0" fill="none" stroke-width="1.5"/><path d="M34 478.25H40M36.98 478.25V484.45" stroke="#e8ecf0" fill="none" stroke-width="1.5"/><path d="M31.75 511.73 41.16 509.73 42.2 517.22 34.71 520.18ZM31.75 511.73 42.2 517.22" stroke="#e8ecf0" fill="none" stroke-width="1.3"/><circle cx="31.75" cy="511.73" r="1.75" fill="#272b36" stroke="#e8ecf0" fill="none" stroke-width="1.3"/><circle cx="41.16" cy="509.73" r="1.75" fill="#272b36" stroke="#e8ecf0" stroke-width="1.3"/><circle cx="42.2" cy="517.22" r="1.75" fill="#272b36" stroke="#e8ecf0" stroke-width="1.3"/><circle cx="34.71" cy="520.18" r="1.75" fill="#272b36" stroke="#e8ecf0" stroke-width="1.3"/><path d="M16.5 571.3C14.8 570.5 13.8 569.1 13.8 567.4 13.8 565.7 14.9 564.4 16.5 564 17.3 561.9 19.1 560.75 21.2 560.75 23.3 560.75 24.8 562.1 25.3 564.4L28.1 566.5" stroke="#e8ecf0" fill="none" stroke-width="1.5"/><circle cx="20.98" cy="567.2" r="1.55" stroke="#e8ecf0" fill="none" stroke-width="1.4"/><circle cx="24.46" cy="570.68" r="1.55" stroke="#e8ecf0" fill="none" stroke-width="1.4"/><path d="M22.1 568.3 23.3 569.5" stroke="#e8ecf0" fill="none" stroke-width="1.4"/><defs><linearGradient id="sg" gradientUnits="userSpaceOnUse" x1="17.8" y1="886.8" x2="24.2" y2="893.1"><stop offset="0" stop-color="#4a95f0"/><stop offset=".5" stop-color="#c455e4"/><stop offset="1" stop-color="#f6703e"/></linearGradient></defs><path d="M20.98 883.53Q21.73 889.18 27.380000000000003 889.93 21.73 890.68 20.98 896.3299999999999 20.23 890.68 14.58 889.93 20.23 889.18 20.98 883.53Z" stroke="url(#sg)" stroke-width="1.3" fill="none" stroke-linejoin="round"/><path d="M13.85 919.7H18.3C19.7 919.7 20.8 920.5 20.8 921.8 20.8 920.5 21.9 919.7 23.3 919.7H28.1V930.1H23.3C22.1 930.1 21.3 930.8 20.8 932.1 20.3 930.8 19.5 930.1 18.3 930.1H13.85ZM20.8 921.8V931.2" stroke="#e8ecf0" fill="none" stroke-width="1.5" stroke-linejoin="round"/><path d="M24.1 924.5H24.85V928.1" stroke="#e8ecf0" fill="none" stroke-width="1.4"/><circle cx="24.8" cy="922.35" r=".75" fill="#e8ecf0"/><path d="M82.48 920.66H77.36V929.92H86.69V924.88" stroke="#e8ecf0" fill="none" stroke-width="1.43"/><path d="M83.98 919.72H87.52V923.45" stroke="#e8ecf0" fill="none" stroke-width="1.35"/><path d="M82.48 925.03 86.9 920.45" stroke="#e8ecf0" fill="none" stroke-width="1.1"/><path d="M19.66 951.84 L22.12 951.84 L23.06 954.32 L25.59 953.51 L27.13 955.43 L25.76 957.72 L27.98 959.18 L27.43 961.59 L24.80 961.95 L25.03 964.59 L22.81 965.66 L20.89 963.83 L18.97 965.66 L16.75 964.59 L16.98 961.95 L14.35 961.59 L13.80 959.18 L16.02 957.72 L14.65 955.43 L16.19 953.51 L18.72 954.33Z" stroke="#e8ecf0" fill="none" stroke-width="1.55" stroke-linejoin="round"/><circle cx="20.89" cy="958.83" r="2.15" stroke="#e8ecf0" fill="none" stroke-width="1.55"/><path d="M568.01 160.36A6.25 6.25 0 1 0 568.23 169.38" stroke="#5b9be3" stroke-width="1.5" fill="none"/><path d="M571.1 158.9V163.05H566.95Z" fill="#5b9be3" stroke="#5b9be3" stroke-width=".3"/><svg x="245.4" y="215.9" width="14.2" height="14.2" viewBox="2 2 20 20"><path d="M14.7 6.3a1 1 0 0 0 0 1.4l1.6 1.6a1 1 0 0 0 1.4 0l3.77-3.77a6 6 0 0 1-7.94 7.94l-6.91 6.91a2.12 2.12 0 0 1-3-3l6.91-6.91a6 6 0 0 1 7.940-7.94l-3.76 3.76z" stroke="#92a4b3" stroke-width="2.1" fill="none" stroke-linejoin="round"/></svg><path d="M1136.3 573.1 1129.4 582.05H1134.3L1133.3 588.2 1140.6 579.2H1135.6Z" stroke="#92a4b3" stroke-width="1.35" fill="none" stroke-linejoin="round"/><path d="M15.4 24.8V15.2M15.4 19C15.4 16.8 16.7 15.6 18.7 15.6 20.8 15.6 22 16.8 22 19V24.8M22 19C22 16.8 23.3 15.6 25.3 15.6 27.4 15.6 28.55 16.8 28.55 19V24.8" stroke="#f2f4f6" stroke-width="2.3" fill="none"/><path d="M32.6 10.6V24.8" stroke="#f2f4f6" stroke-width="2.5"/><path d="M32.9 29.3C34.9 29.8 36.3 28.9 36.9 26.6L40.6 11C41.2 8.3 42.6 6.6 45.6 7.2" stroke="#3d90e2" stroke-width="2.3" fill="none" stroke-linecap="round"/><path d="M36.2 14.1H44.6" stroke="#3d90e2" stroke-width="2"/><path d="M49.9 10.4 46.4 24.9" stroke="#3d90e2" stroke-width="2.4"/><path d="M51.3 21.2A4.15 4.15 0 0 1 58.6 17.5" stroke="#5cc6e8" stroke-width="2.2" fill="none"/><path d="M59.3 19.2A4.15 4.15 0 0 1 52.2 22.9" stroke="#3d8fe0" stroke-width="2.2" fill="none"/><path d="M61.9 15.3 63.3 24.6 68.2 15.7 69.6 24.6 75.5 15.3" stroke="#3d90e2" stroke-width="2.2" fill="none" stroke-linejoin="miter"/><text x="77.3" y="17" font-size="3" fill="#43a0e6" font-family="Liberation Sans">TM</text></svg>
</div></body></html>
